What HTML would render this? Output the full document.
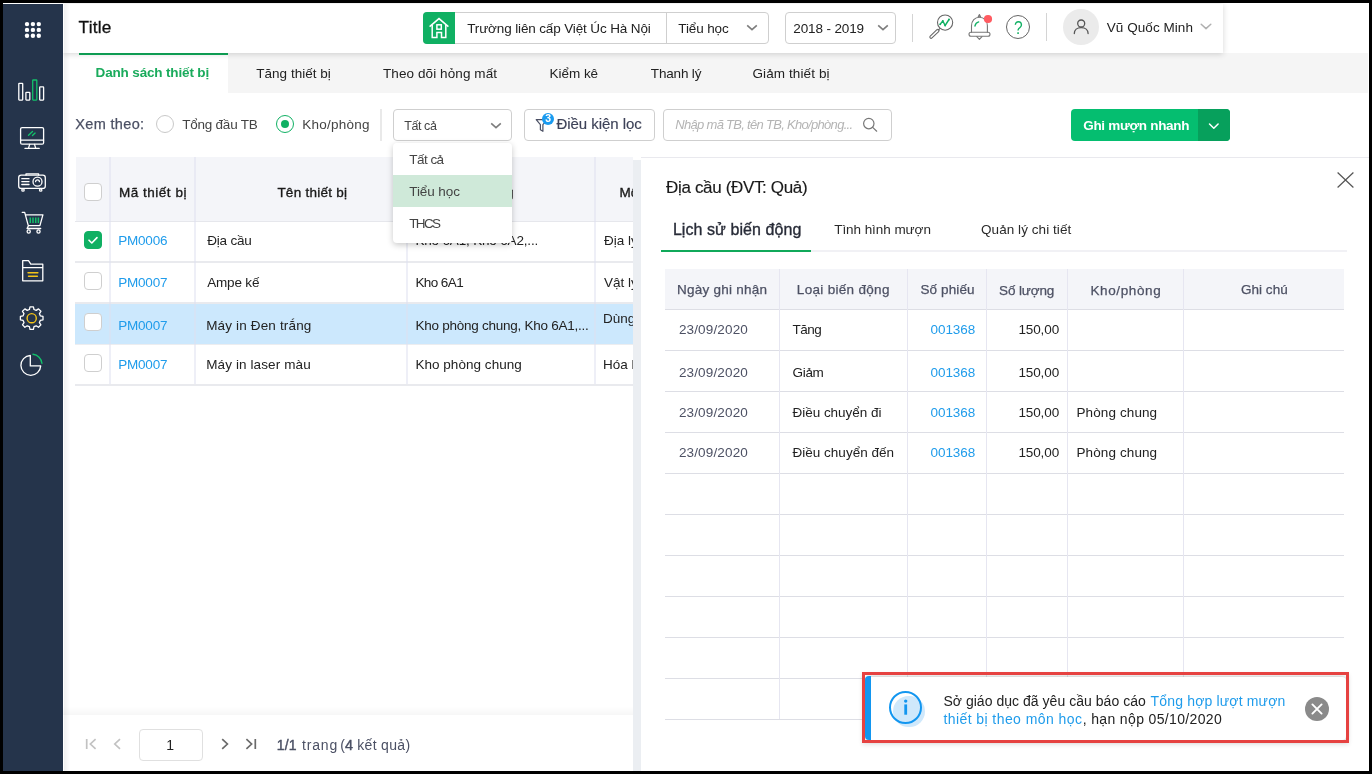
<!DOCTYPE html>
<html lang="vi">
<head>
<meta charset="utf-8">
<title>Danh sách thiết bị</title>
<style>
*{box-sizing:border-box;margin:0;padding:0}
html,body{width:1372px;height:774px;overflow:hidden;background:#000}
body{font-family:"Liberation Sans",sans-serif;font-size:13.5px;color:#222;position:relative}
.abs,.t,.layer,svg.i{position:absolute}
.layer{left:0;top:0;width:1372px;height:774px}
.t{white-space:nowrap;line-height:1}
.layer{will-change:transform}
svg.i{overflow:visible}
.cb{width:18px;height:18px;border:1px solid #cfcfcf;border-radius:4px;background:#fff}
.cb.on{background:#10b063;border-color:#10b063}
.cb svg{position:absolute;left:-1px;top:-1px}
.box{border:1px solid #cfcfcf;border-radius:4px;background:#fff}
.hl{background:#dddee5}
.vl{background:#e6e6f1}
#app{left:3px;top:3px;width:1366px;height:768px;background:#fff;overflow:hidden}
</style>
</head>
<body>
<div id="app" class="abs"></div>

<!-- tabs strip -->
<nav class="layer" id="tabs">
  <div class="abs" style="left:228px;top:53px;width:1139.5px;height:40px;background:#f5f5f5"></div>
  <div class="abs" style="left:79px;top:53px;width:149px;height:2px;background:#10a95a"></div>
  <span class="t" style="left:95.60px;top:66.00px;font-size:13.5px;letter-spacing:-0.160px;color:#1aab5c;font-weight:bold;">Danh sách thiết bị</span>
  <span class="t" style="left:256.30px;top:67.00px;font-size:13.5px;letter-spacing:0.017px;">Tăng thiết bị</span>
  <span class="t" style="left:383.00px;top:67.00px;font-size:13.5px;letter-spacing:0.092px;">Theo dõi hỏng mất</span>
  <span class="t" style="left:549.50px;top:67.00px;font-size:13.5px;letter-spacing:-0.026px;">Kiểm kê</span>
  <span class="t" style="left:650.80px;top:67.00px;font-size:13.5px;letter-spacing:-0.161px;">Thanh lý</span>
  <span class="t" style="left:752.40px;top:67.00px;font-size:13.5px;letter-spacing:0.118px;">Giảm thiết bị</span>
</nav>

<!-- left table -->
<section class="layer" id="ltable" style="width:633px;overflow:hidden">
  <div class="abs" style="left:76px;top:157px;width:560px;height:64px;background:#f4f5f9"></div>
  <div class="abs" style="left:75px;top:304px;width:560px;height:40px;background:#cce8fd"></div>
  <div class="abs" style="left:75px;top:221px;width:560px;height:1px;background:#e6e7ec"></div>
  <div class="abs" style="left:75px;top:261px;width:560px;height:2px;background:#e9eaee"></div>
  <div class="abs" style="left:75px;top:302px;width:560px;height:2px;background:#e9eaee"></div>
  <div class="abs" style="left:75px;top:344px;width:560px;height:1px;background:#ecedf0"></div>
  <div class="abs" style="left:75px;top:384px;width:560px;height:2px;background:#e9eaee"></div>
  <div class="abs" style="left:109px;top:157px;width:2px;height:227px;background:rgba(222,224,240,.5)"></div>
  <div class="abs" style="left:194px;top:157px;width:2px;height:227px;background:rgba(222,224,240,.5)"></div>
  <div class="abs" style="left:406px;top:157px;width:2px;height:227px;background:rgba(222,224,240,.5)"></div>
  <div class="abs" style="left:594px;top:157px;width:2px;height:227px;background:rgba(222,224,240,.5)"></div>
  <div class="abs cb" style="left:84px;top:183px"></div>
  <div class="abs cb on" style="left:84px;top:231px"><svg width="18" height="18" viewBox="0 0 18 18"><path d="M5 9.2l2.8 2.8L13 6.6" fill="none" stroke="#fff" stroke-width="1.6" stroke-linecap="round" stroke-linejoin="round"/></svg></div>
  <div class="abs cb" style="left:84px;top:272px"></div>
  <div class="abs cb" style="left:84px;top:313px"></div>
  <div class="abs cb" style="left:84px;top:354px"></div>
  <span class="t" style="left:118.88px;top:186.00px;font-size:13.5px;letter-spacing:0.527px;color:#1a1a1a;-webkit-text-stroke:0.35px #1a1a1a;">Mã thiết bị</span>
  <span class="t" style="left:277.38px;top:186.00px;font-size:13.5px;letter-spacing:0.251px;color:#1a1a1a;-webkit-text-stroke:0.35px #1a1a1a;">Tên thiết bị</span>
  <span class="t" style="left:444.18px;top:186.00px;font-size:13.5px;letter-spacing:0.506px;color:#1a1a1a;-webkit-text-stroke:0.35px #1a1a1a;">Kho/phòng</span>
  <span class="t" style="left:619.38px;top:186.00px;font-size:13.5px;letter-spacing:0.070px;color:#1a1a1a;-webkit-text-stroke:0.35px #1a1a1a;">Môn học</span>
  <span class="t" style="left:118.20px;top:234.00px;font-size:13.5px;letter-spacing:-0.195px;color:#1f9ceb;">PM0006</span>
  <span class="t" style="left:207.20px;top:234.00px;font-size:13.5px;letter-spacing:-0.194px;">Địa cầu</span>
  <span class="t" style="left:415.40px;top:234.00px;font-size:13.5px;letter-spacing:-0.170px;">Kho 6A1, Kho 6A2,...</span>
  <span class="t" style="left:604.00px;top:234.00px;font-size:13.5px;">Địa lý</span>
  <span class="t" style="left:118.20px;top:276.00px;font-size:13.5px;letter-spacing:-0.195px;color:#1f9ceb;">PM0007</span>
  <span class="t" style="left:207.20px;top:276.00px;font-size:13.5px;letter-spacing:-0.178px;">Ampe kế</span>
  <span class="t" style="left:415.40px;top:276.00px;font-size:13.5px;letter-spacing:-0.581px;">Kho 6A1</span>
  <span class="t" style="left:604.00px;top:276.00px;font-size:13.5px;">Vật lý</span>
  <span class="t" style="left:118.20px;top:319.00px;font-size:13.5px;letter-spacing:-0.195px;color:#1f9ceb;">PM0007</span>
  <span class="t" style="left:206.20px;top:319.00px;font-size:13.5px;letter-spacing:0.154px;">Máy in Đen trắng</span>
  <span class="t" style="left:415.40px;top:319.00px;font-size:13.5px;letter-spacing:-0.248px;">Kho phòng chung, Kho 6A1,...</span>
  <span class="t" style="left:603.00px;top:312.00px;font-size:13.5px;">Dùng chung</span>
  <span class="t" style="left:118.20px;top:358.00px;font-size:13.5px;letter-spacing:-0.195px;color:#1f9ceb;">PM0007</span>
  <span class="t" style="left:206.20px;top:358.00px;font-size:13.5px;letter-spacing:0.115px;">Máy in laser màu</span>
  <span class="t" style="left:415.40px;top:358.00px;font-size:13.5px;letter-spacing:0.040px;">Kho phòng chung</span>
  <span class="t" style="left:603.00px;top:358.00px;font-size:13.5px;">Hóa học</span>
</section>

<!-- filter bar -->
<section class="layer" id="filter">
  <div class="abs" style="left:156px;top:115px;width:18px;height:18px;border:1px solid #c8c8c8;border-radius:50%;background:#fff"></div>
  <div class="abs" style="left:276px;top:115px;width:18px;height:18px;border:1px solid #10b063;border-radius:50%;background:#fff"></div>
  <div class="abs" style="left:281px;top:120px;width:8px;height:8px;border-radius:50%;background:#10b063"></div>
  <div class="abs" style="left:380px;top:109px;width:2px;height:32px;background:#e9e9e9"></div>
  <div class="abs box" style="left:393px;top:109px;width:119px;height:32px"></div>
  <svg class="i" style="left:490px;top:121px" width="12" height="9" viewBox="0 0 12 9" fill="none" stroke="#7d7d7d" stroke-width="1.6" stroke-linecap="butt" stroke-linejoin="miter"><path d="M1.2 2.3l4.8 4.3 4.8-4.3"/></svg>
  <div class="abs box" style="left:524px;top:109px;width:131px;height:32px"></div>
  <svg class="i" style="left:535px;top:118px" width="14" height="15" viewBox="0 0 14 15" fill="none" stroke="#4b5064" stroke-width="1.2" stroke-linejoin="round"><path d="M1.2 1.7h11l-4.3 5v6.6l-2.5-1.5V6.7z"/></svg>
  <div class="abs" style="left:542px;top:112.5px;width:12.2px;height:12.2px;border-radius:50%;background:#1a9bf0"></div>
  <div class="abs box" style="left:663px;top:109px;width:229px;height:32px"></div>
  <svg class="i" style="left:862px;top:117px" width="17" height="16" viewBox="0 0 17 16" fill="none" stroke="#777" stroke-width="1.2" stroke-linecap="round"><circle cx="6.8" cy="6.6" r="5.2"/><path d="M10.7 10.4l4 3.8"/></svg>
  <div class="abs" style="left:1071px;top:109px;width:159px;height:32px;border-radius:4px;background:#05be70"></div>
  <div class="abs" style="left:1198px;top:109px;width:32px;height:32px;border-radius:0 4px 4px 0;background:#07a05c"></div>
  <svg class="i" style="left:1208px;top:121.8px" width="12" height="9" viewBox="0 0 12 9" fill="none" stroke="#fff" stroke-width="1.5" stroke-linecap="round" stroke-linejoin="round"><path d="M1.5 2l4.3 4.3L10.1 2"/></svg>
  <span class="t" style="left:75.22px;top:117.00px;font-size:14.5px;letter-spacing:0.348px;color:#4b5064;-webkit-text-stroke:0.25px #4b5064;">Xem theo:</span>
  <span class="t" style="left:182.30px;top:118.00px;font-size:13.5px;letter-spacing:-0.244px;color:#444;">Tổng đầu TB</span>
  <span class="t" style="left:302.20px;top:118.00px;font-size:13.5px;letter-spacing:0.250px;color:#444;">Kho/phòng</span>
  <span class="t" style="left:404.30px;top:120.00px;font-size:12.5px;letter-spacing:-0.437px;color:#444;">Tất cả</span>
  <span class="t" style="left:556.48px;top:116.00px;font-size:15px;letter-spacing:-0.044px;color:#3d4258;-webkit-text-stroke:0.15px #3d4258;">Điều kiện lọc</span>
  <span class="t" style="left:545.30px;top:113.00px;font-size:10.5px;color:#fff;font-weight:bold;">3</span>
  <span class="t" style="left:675.30px;top:118.00px;font-size:13px;letter-spacing:-0.698px;color:#b4b4b4;font-style:italic;">Nhập mã TB, tên TB, Kho/phòng...</span>
  <span class="t" style="left:1083.20px;top:119.00px;font-size:13.5px;letter-spacing:-0.290px;color:#fff;font-weight:bold;">Ghi mượn nhanh</span>
</section>

<!-- dropdown menu -->
<ul class="layer" id="menu" style="list-style:none">
  <div class="abs" style="left:393px;top:143px;width:119px;height:100px;background:#fff;border-radius:4px;box-shadow:0 2px 6px rgba(0,0,0,.22)"></div>
  <div class="abs" style="left:393px;top:175px;width:119px;height:32px;background:#cfe9d9"></div>
  <span class="t" style="left:409.30px;top:153.00px;font-size:13.5px;letter-spacing:-0.541px;color:#444;">Tất cả</span>
  <span class="t" style="left:409.30px;top:185.00px;font-size:13.5px;letter-spacing:-0.090px;color:#444;">Tiểu học</span>
  <span class="t" style="left:409.30px;top:217.00px;font-size:13.5px;letter-spacing:-1.682px;color:#444;">THCS</span>
</ul>

<!-- right panel -->
<aside class="layer" id="panel">
  <div class="abs" style="left:633px;top:160px;width:8px;height:611px;background:#ebeef2"></div>
  <div class="abs" style="left:641px;top:157px;width:728px;height:614px;background:#fff;border-top:1px solid #e9e9ee"></div>
  <svg class="i" style="left:1337px;top:172px" width="17" height="16" viewBox="0 0 17 16" fill="none" stroke="#555" stroke-width="1.2"><path d="M.6.5l15.8 15M16.4.5L.6 15.5"/></svg>
  <div class="abs" style="left:661px;top:250px;width:686px;height:2px;background:#f1f1f5"></div>
  <div class="abs" style="left:661px;top:250px;width:150px;height:2px;background:#10a95a"></div>
  <div class="abs" style="left:665px;top:269px;width:679px;height:40px;background:#f4f5f9"></div>
  <div class="abs hl" style="left:665px;top:309px;width:679px;height:1px"></div>
  <div class="abs hl" style="left:665px;top:350px;width:679px;height:1px"></div>
  <div class="abs hl" style="left:665px;top:391px;width:679px;height:1px"></div>
  <div class="abs hl" style="left:665px;top:432px;width:679px;height:1px"></div>
  <div class="abs hl" style="left:665px;top:473px;width:679px;height:1px"></div>
  <div class="abs hl" style="left:665px;top:514px;width:679px;height:1px"></div>
  <div class="abs hl" style="left:665px;top:555px;width:679px;height:1px"></div>
  <div class="abs hl" style="left:665px;top:596px;width:679px;height:1px"></div>
  <div class="abs hl" style="left:665px;top:637px;width:679px;height:1px"></div>
  <div class="abs hl" style="left:665px;top:678px;width:679px;height:1px"></div>
  <div class="abs hl" style="left:665px;top:719px;width:679px;height:1px"></div>
  <div class="abs vl" style="left:779px;top:269px;width:1px;height:450px"></div>
  <div class="abs vl" style="left:907px;top:269px;width:1px;height:450px"></div>
  <div class="abs vl" style="left:986px;top:269px;width:1px;height:450px"></div>
  <div class="abs vl" style="left:1066.5px;top:269px;width:1px;height:450px"></div>
  <div class="abs vl" style="left:1183px;top:269px;width:1px;height:450px"></div>
  <span class="t" style="left:666.08px;top:179.00px;font-size:17px;letter-spacing:-0.345px;color:#1a1a1a;-webkit-text-stroke:0.15px #1a1a1a;">Địa cầu (ĐVT: Quả)</span>
  <span class="t" style="left:672.88px;top:222.00px;font-size:16px;letter-spacing:0.075px;color:#282c38;-webkit-text-stroke:0.35px #282c38;">Lịch sử biến động</span>
  <span class="t" style="left:834.20px;top:223.00px;font-size:13.5px;letter-spacing:-0.056px;color:#2a2a2a;">Tình hình mượn</span>
  <span class="t" style="left:981.00px;top:223.00px;font-size:13.5px;letter-spacing:0.064px;color:#2a2a2a;">Quản lý chi tiết</span>
  <span class="t" style="left:676.92px;top:283.00px;font-size:13.5px;letter-spacing:0.258px;color:#4d5164;-webkit-text-stroke:0.25px #4d5164;">Ngày ghi nhận</span>
  <span class="t" style="left:796.83px;top:283.00px;font-size:13.5px;letter-spacing:0.306px;color:#4d5164;-webkit-text-stroke:0.25px #4d5164;">Loại biến động</span>
  <span class="t" style="left:920.42px;top:283.00px;font-size:13.5px;letter-spacing:0.123px;color:#4d5164;-webkit-text-stroke:0.25px #4d5164;">Số phiếu</span>
  <span class="t" style="left:999.12px;top:284.00px;font-size:13.5px;letter-spacing:-0.130px;color:#4d5164;-webkit-text-stroke:0.25px #4d5164;">Số lượng</span>
  <span class="t" style="left:1090.42px;top:284.00px;font-size:13.5px;letter-spacing:0.618px;color:#4d5164;-webkit-text-stroke:0.25px #4d5164;">Kho/phòng</span>
  <span class="t" style="left:1241.03px;top:283.00px;font-size:13.5px;letter-spacing:0.022px;color:#4d5164;-webkit-text-stroke:0.25px #4d5164;">Ghi chú</span>
  <span class="t" style="left:678.90px;top:323.00px;font-size:13.5px;letter-spacing:0.149px;color:#4d5164;">23/09/2020</span>
  <span class="t" style="left:792.50px;top:323.00px;font-size:13.5px;letter-spacing:-0.487px;">Tăng</span>
  <span class="t" style="left:930.60px;top:323.00px;font-size:13.5px;letter-spacing:-0.088px;color:#1f9ceb;">001368</span>
  <span class="t" style="left:1018.40px;top:323.00px;font-size:13.5px;letter-spacing:-0.097px;">150,00</span>
  <span class="t" style="left:678.90px;top:366.00px;font-size:13.5px;letter-spacing:0.149px;color:#4d5164;">23/09/2020</span>
  <span class="t" style="left:792.50px;top:366.00px;font-size:13.5px;letter-spacing:-0.303px;">Giảm</span>
  <span class="t" style="left:930.60px;top:366.00px;font-size:13.5px;letter-spacing:-0.088px;color:#1f9ceb;">001368</span>
  <span class="t" style="left:1018.40px;top:366.00px;font-size:13.5px;letter-spacing:-0.097px;">150,00</span>
  <span class="t" style="left:678.90px;top:406.00px;font-size:13.5px;letter-spacing:0.149px;color:#4d5164;">23/09/2020</span>
  <span class="t" style="left:792.50px;top:406.00px;font-size:13.5px;letter-spacing:-0.024px;">Điều chuyển đi</span>
  <span class="t" style="left:930.60px;top:406.00px;font-size:13.5px;letter-spacing:-0.088px;color:#1f9ceb;">001368</span>
  <span class="t" style="left:1018.40px;top:406.00px;font-size:13.5px;letter-spacing:-0.097px;">150,00</span>
  <span class="t" style="left:1076.50px;top:406.00px;font-size:13.5px;letter-spacing:0.104px;">Phòng chung</span>
  <span class="t" style="left:678.90px;top:446.00px;font-size:13.5px;letter-spacing:0.149px;color:#4d5164;">23/09/2020</span>
  <span class="t" style="left:792.50px;top:446.00px;font-size:13.5px;letter-spacing:0.013px;">Điều chuyển đến</span>
  <span class="t" style="left:930.60px;top:446.00px;font-size:13.5px;letter-spacing:-0.088px;color:#1f9ceb;">001368</span>
  <span class="t" style="left:1018.40px;top:446.00px;font-size:13.5px;letter-spacing:-0.097px;">150,00</span>
  <span class="t" style="left:1076.50px;top:446.00px;font-size:13.5px;letter-spacing:0.104px;">Phòng chung</span>
</aside>

<!-- pagination -->
<footer class="layer" id="pager">
  <div class="abs" style="left:63px;top:707px;width:570px;height:8px;background:linear-gradient(to bottom,rgba(0,0,0,0),rgba(0,0,0,.035))"></div>
  <div class="abs" style="left:63px;top:715px;width:570px;height:56px;background:#fff"></div>
  <svg class="i" style="left:85px;top:738px" width="12" height="12" viewBox="0 0 12 12" fill="none" stroke="#c2c2c2" stroke-width="1.7"><path d="M1.7 1v10M10.6 1.2L5.4 6l5.2 4.8"/></svg>
  <svg class="i" style="left:113px;top:738px" width="9" height="12" viewBox="0 0 9 12" fill="none" stroke="#c2c2c2" stroke-width="1.7"><path d="M7 1.2L1.8 6 7 10.8"/></svg>
  <div class="abs box" style="left:139px;top:729px;width:64px;height:32px;border-color:#e0e0e0"></div>
  <svg class="i" style="left:220px;top:738px" width="9" height="12" viewBox="0 0 9 12" fill="none" stroke="#6a6a6a" stroke-width="1.7"><path d="M2.2 1.2L7.4 6 2.2 10.8"/></svg>
  <svg class="i" style="left:245px;top:738px" width="12" height="12" viewBox="0 0 12 12" fill="none" stroke="#6a6a6a" stroke-width="1.7"><path d="M10.3 1v10M1.4 1.2L6.6 6l-5.2 4.8"/></svg>
  <span class="t" style="left:166.30px;top:738.00px;font-size:14px;">1</span>
  <span class="t" style="left:276.70px;top:738.00px;font-size:14px;letter-spacing:0.212px;color:#4b5064;-webkit-text-stroke:0.4px #4b5064;">1/1</span>
  <span class="t" style="left:302.00px;top:738.00px;font-size:14px;letter-spacing:0.819px;color:#4b5064;">trang</span>
  <span class="t" style="left:340.30px;top:738.00px;font-size:14px;color:#4b5064;">(</span>
  <span class="t" style="left:345.00px;top:738.00px;font-size:14.5px;color:#4b5064;-webkit-text-stroke:0.4px #4b5064;">4</span>
  <span class="t" style="left:357.20px;top:738.00px;font-size:14px;letter-spacing:0.339px;color:#4b5064;">kết quả)</span>
</footer>

<!-- toast -->
<div class="layer" id="toast">
  <div class="abs" style="left:865.5px;top:676.5px;width:480px;height:63px;background:#fff;border-radius:4px;box-shadow:0 0 5px rgba(0,0,0,.32)"></div>
  <div class="abs" style="left:865px;top:676px;width:6px;height:64px;background:#1296f0;border-radius:4px 0 0 4px"></div>
  <div class="abs" style="left:893.3px;top:696px;width:31.4px;height:31.4px;border-radius:50%;background:#cfe8fb"></div>
  <div class="abs" style="left:889px;top:690.7px;width:33.4px;height:33.4px;border-radius:50%;border:2px solid #1296f0"></div>
  <svg class="i" style="left:889px;top:691px" width="33" height="33" viewBox="0 0 33 33" fill="#1296f0"><circle cx="16.7" cy="10.1" r="1.7"/><rect x="15.3" y="13.4" width="2.8" height="10.3"/></svg>
  <div class="abs" style="left:1305px;top:697px;width:24px;height:24px;border-radius:50%;background:#8a8a8a"></div>
  <svg class="i" style="left:1305px;top:697px" width="24" height="24" viewBox="0 0 24 24" fill="none" stroke="#fff" stroke-width="1.9" stroke-linecap="round"><path d="M7.4 7.4l9.2 9.2M16.6 7.4l-9.2 9.2"/></svg>
  <div class="abs" style="left:862px;top:672px;width:487px;height:71px;border:3px solid #e64241;box-shadow:0 2px 4px rgba(0,0,0,.1)"></div>
  <p><span class="t" style="left:943.40px;top:694.00px;font-size:14px;letter-spacing:0.033px;">Sở giáo dục đã yêu cầu báo cáo</span>
  <span class="t" style="left:1150.60px;top:694.00px;font-size:14px;letter-spacing:0.165px;color:#1f9ceb;">Tổng hợp lượt mượn</span>
  <span class="t" style="left:943.40px;top:712.00px;font-size:14px;letter-spacing:0.426px;color:#1f9ceb;">thiết bị theo môn học</span>
  <span class="t" style="left:1082.70px;top:712.00px;font-size:14px;letter-spacing:0.355px;">, hạn nộp 05/10/2020</span></p>
</div>

<!-- header -->
<header class="layer" id="hdr">
  <div class="abs" style="left:63px;top:4px;width:1160px;height:49px;background:#fff;box-shadow:0 1px 6px rgba(0,0,0,.17)"></div>
  <div class="abs box" style="left:423px;top:12px;width:346px;height:32px"></div>
  <div class="abs" style="left:423px;top:12px;width:32px;height:32px;background:#10b063;border-radius:4px 0 0 4px"></div>
  <svg class="i" style="left:423px;top:12px" width="32" height="32" viewBox="0 0 32 32" fill="none" stroke="#fff" stroke-width="1.5" stroke-linejoin="miter"><path d="M6.6 14.6L16 6.6l9.4 8"/><path d="M9.2 13v12.5h4.7v-5h4.6v5h4.3V13"/><rect x="13.9" y="12.8" width="4.4" height="4.4"/></svg>
  <div class="abs" style="left:666px;top:13px;width:1px;height:30px;background:#cfcfcf"></div>
  <svg class="i" style="left:746px;top:23px" width="12" height="9" viewBox="0 0 12 9" fill="none" stroke="#7d7d7d" stroke-width="1.6" stroke-linecap="butt" stroke-linejoin="miter"><path d="M1.2 2.3l4.8 4.3 4.8-4.3"/></svg>
  <div class="abs box" style="left:785px;top:12px;width:111px;height:32px"></div>
  <svg class="i" style="left:877px;top:23px" width="12" height="9" viewBox="0 0 12 9" fill="none" stroke="#7d7d7d" stroke-width="1.6" stroke-linecap="butt" stroke-linejoin="miter"><path d="M1.2 2.3l4.8 4.3 4.8-4.3"/></svg>
  <div class="abs" style="left:912px;top:14px;width:1px;height:28px;background:#d4d4d4"></div>
  <svg class="i" style="left:926px;top:12px" width="30" height="30" viewBox="0 0 30 30" fill="none" stroke="#666" stroke-width="1.1" stroke-linecap="round" stroke-linejoin="round"><circle cx="19.1" cy="10.6" r="7.6"/><path d="M11.8 18.6L5.1 25" stroke-width="3.6"/><path d="M11.8 18.6L5.1 25" stroke="#fff" stroke-width="1.5"/><path d="M12.2 18.2l1.6-1.6"/><path d="M14.2 12.3l2.6-3.4 2.3 4.6 3.9-6" stroke="#10b063" stroke-width="1.4"/><circle cx="14.2" cy="12.3" r=".9" fill="#10b063" stroke="none"/><circle cx="16.8" cy="8.9" r=".9" fill="#10b063" stroke="none"/><circle cx="19.1" cy="13.5" r=".9" fill="#10b063" stroke="none"/><circle cx="23" cy="7.5" r=".9" fill="#10b063" stroke="none"/></svg>
  <svg class="i" style="left:965px;top:12px" width="30" height="30" viewBox="0 0 30 30" fill="none" stroke="#777" stroke-width="1.1" stroke-linecap="round" stroke-linejoin="round"><path d="M13.2 4.8l1.2-2.2 1.2 2.2z"/><path d="M6.5 20.3v-6.5c0-5 3.4-8.6 7.9-8.6 4.6 0 8 3.6 8 8.6v6.5"/><rect x="4" y="20.3" width="21" height="4" rx="2"/><path d="M11.8 24.6l2.6 2.7 2.6-2.7"/><path d="M9.9 14c.5-2.2 1.9-3.6 3.8-4.1" stroke="#10b063" stroke-width="1.3"/><circle cx="23" cy="7" r="4.1" fill="#ff5b61" stroke="none"/></svg>
  <div class="abs" style="left:1006px;top:15px;width:24px;height:24px;border:1px solid #666;border-radius:50%"></div>
  <div class="abs" style="left:1046px;top:13px;width:1px;height:28px;background:#d4d4d4"></div>
  <div class="abs" style="left:1063px;top:9px;width:36px;height:36px;border-radius:50%;background:#ebebeb"></div>
  <svg class="i" style="left:1063px;top:9px" width="36" height="36" viewBox="0 0 36 36" fill="none" stroke="#555" stroke-width="1.3" stroke-linecap="round"><circle cx="18.2" cy="14.5" r="3.5"/><path d="M11.3 24.6c0-3.5 2.8-6 6.9-6s6.9 2.5 6.9 6"/></svg>
  <svg class="i" style="left:1200px;top:22px" width="12" height="9" viewBox="0 0 12 9" fill="none" stroke="#b0b0b0" stroke-width="1.5" stroke-linecap="round" stroke-linejoin="round"><path d="M1.2 2.3l4.8 4.3 4.8-4.3"/></svg>
  <span class="t" style="left:78.55px;top:19.00px;font-size:17.2px;letter-spacing:0.257px;color:#111;-webkit-text-stroke:0.3px #111;">Title</span>
  <span class="t" style="left:467.20px;top:22.00px;font-size:13.5px;letter-spacing:-0.133px;">Trường liên cấp Việt Úc Hà Nội</span>
  <span class="t" style="left:678.30px;top:22.00px;font-size:13.5px;letter-spacing:-0.118px;">Tiểu học</span>
  <span class="t" style="left:793.30px;top:22.00px;font-size:13.5px;letter-spacing:-0.135px;">2018 - 2019</span>
  <span class="t" style="left:1106.80px;top:21.00px;font-size:13.5px;letter-spacing:0.051px;">Vũ Quốc Minh</span>
  <span class="t" style="left:1014.10px;top:18.00px;font-size:19px;color:#10b063;transform:scaleX(.82);transform-origin:0 0;">?</span>
</header>

<!-- sidebar -->
<div class="abs" id="side" style="left:3px;top:4px;width:60px;height:767px;background:#25344b"></div>
<div class="abs" style="left:64px;top:4px;width:6px;height:767px;background:linear-gradient(to right,rgba(0,0,0,.06),rgba(0,0,0,0))"></div>
<svg class="i" style="left:3px;top:3px" width="60" height="400" viewBox="3 3 60 400" fill="none" stroke="#fff" stroke-width="1.3" stroke-linejoin="round" stroke-linecap="round">
 <g fill="#fff" stroke="none"><circle cx="27" cy="24.1" r="2.2"/><circle cx="32.9" cy="24.1" r="2.2"/><circle cx="38.8" cy="24.1" r="2.2"/><circle cx="27" cy="29.9" r="2.2"/><circle cx="32.9" cy="29.9" r="2.2"/><circle cx="38.8" cy="29.9" r="2.2"/><circle cx="27" cy="35.7" r="2.2"/><circle cx="32.9" cy="35.7" r="2.2"/><circle cx="38.8" cy="35.7" r="2.2"/></g>
 <rect x="18.8" y="83.3" width="3.9" height="16.8" rx=".5"/><rect x="25.9" y="92.3" width="3.9" height="7.8" rx=".5"/><rect x="32.7" y="80" width="4.1" height="20.1" rx=".5" stroke="#12c06a"/><rect x="39.7" y="86.9" width="3.9" height="13.2" rx=".5"/>
 <rect x="20.6" y="127.6" width="23" height="16.6" rx="1.5"/><path d="M20.6 140.1h23M29.7 144.4l-1.2 3.7M34.5 144.4l1.2 3.7M25 148.4h14.2"/><path d="M28.5 135.2l4-3.8M32.5 135.5l2.6-2.4" stroke="#12c06a" stroke-width="1.4"/>
 <rect x="18.7" y="175.2" width="26.6" height="13.2" rx="2.5"/><path d="M26 175v-1.2h12.6v1.2M21.8 178.7h7.2M21.8 181.6h7.2M21.8 184.5h7.2"/><circle cx="37.5" cy="181.7" r="4.5"/><path d="M35.6 181.7a1.9 1.9 0 0 1 3.8 0"/><circle cx="23" cy="190" r="1.2"/><circle cx="40.7" cy="190" r="1.2"/>
 <path d="M22.2 212.3h2.5l3.6 13.3h11.6l3-10.7h-17.4M28.5 225.6l-1.4 2.9h13.6"/><circle cx="28.7" cy="231.5" r="1.6"/><circle cx="38.5" cy="231.5" r="1.6"/><path d="M30.3 217.5v5.5M33 217.5v5.5M35.7 217.5v5.5M38.4 217.5v5.5" stroke="#12c06a" stroke-width="1.5" stroke-linecap="butt"/>
 <path d="M22.7 280.8v-20.2h5.8l2.3 3.6h12v16.6zM22.7 267.6h20.1"/><path d="M28 272.7h9.9M28.5 276.2h8.9" stroke="#f5c518" stroke-width="1.4"/>
 <circle cx="31.7" cy="318.2" r="4.6" stroke="#f5c518" stroke-width="1.4"/>
 <path id="gear" d="M30 306.8h3.4l.6 2.7 2.2.9 2.3-1.5 2.4 2.4-1.5 2.3.9 2.2 2.7.6v3.4l-2.7.6-.9 2.2 1.5 2.3-2.4 2.4-2.3-1.5-2.2.9-.6 2.7H30l-.6-2.7-2.2-.9-2.3 1.5-2.4-2.4 1.5-2.3-.9-2.2-2.7-.6v-3.4l2.7-.6.9-2.2-1.5-2.3 2.4-2.4 2.3 1.5 2.2-.9z"/>
 <path d="M30.3 355.5a9.9 9.9 0 1 0 10.4 10.4h-10.4z"/><path d="M33 354.3a9.9 9.9 0 0 1 8.9 8.9" stroke="#12c06a" stroke-width="1.4"/>
</svg>
</body>
</html>
